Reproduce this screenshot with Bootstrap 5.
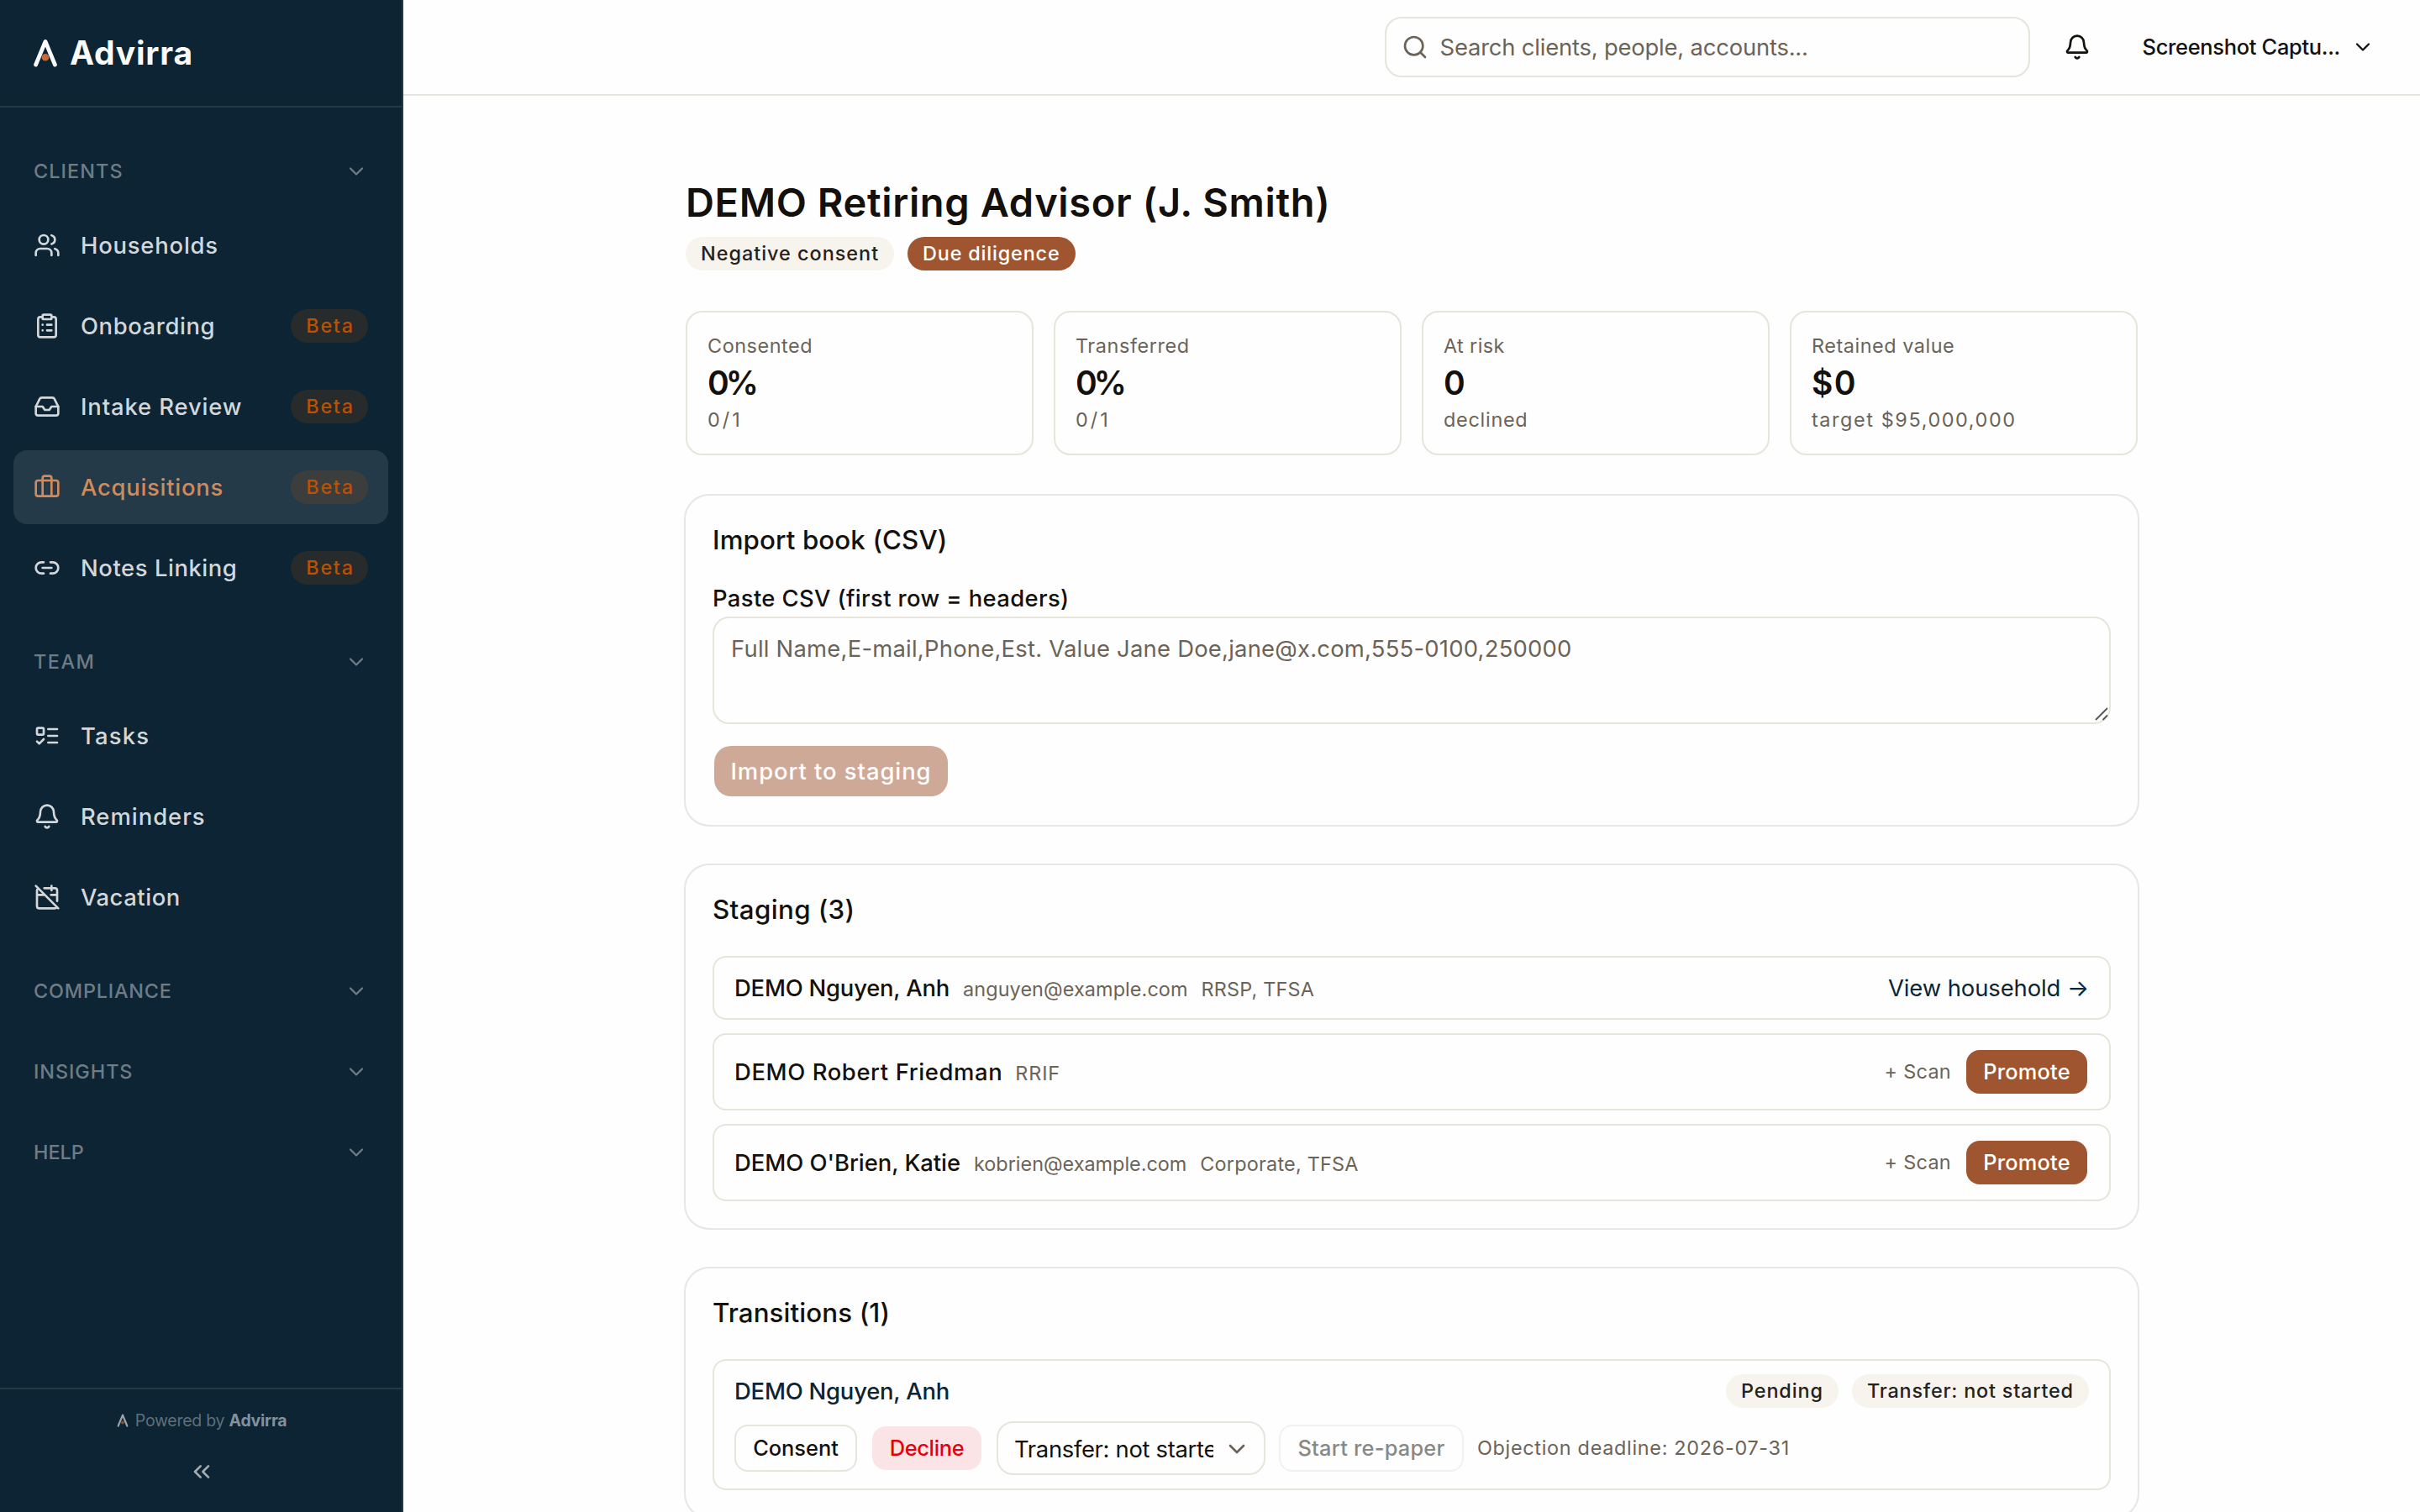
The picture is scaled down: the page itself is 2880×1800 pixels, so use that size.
<!DOCTYPE html>
<html lang="en">
<head>
<meta charset="utf-8">
<title>Advirra – Acquisitions</title>
<link rel="stylesheet" href="https://cdn.jsdelivr.net/npm/bootstrap@5.3.0/dist/css/bootstrap.min.css">
<style>
:root{--navy:#0c2433;--ink:#14110d;--muted:#6b6358;--line:#e7e4dc;--rust:#9f5530;--sand:#f7f4ee}
body{font-family:Inter,"Liberation Sans",sans-serif;font-size:27.4px;line-height:40px;color:var(--ink);background:#fefefe;height:1800px;overflow:hidden}
svg{display:block;fill:none;stroke:currentColor;stroke-width:2;stroke-linecap:round;stroke-linejoin:round;flex:none}
.i32{width:32px;height:32px}.i28{width:28px;height:28px}
.fw-med{font-weight:500}
.t-sm{font-size:23.4px;line-height:32px}
.t-md{font-size:25.4px}
.text-soft{color:var(--muted)}

/* sidebar */
.side{width:480px;height:1800px;background:var(--navy);border-right:2px solid #253a47;color:#d3d7d9}
.side-head{height:128px;border-bottom:2px solid #253a47;padding:0 40px 1px;gap:15px;color:#fafafa}
.brand-name{font-size:39px;font-weight:700;letter-spacing:.8px}
.side-groups{padding:48px 16px 0;gap:40px}
.side-label{height:56px;padding:0 24px;font-size:23.4px;font-weight:500;color:#6f7c85}
.side-label .i28{margin-right:0}
.side-items{padding-top:16px;gap:8px}
.side-item{height:88px;padding:0 24px;gap:24px;border-radius:16px;font-weight:500}
.side-item.on{background:#253a48;color:#d08a5c}
.beta{width:92px;height:40px;border-radius:20px;background:rgba(193,84,0,.15);color:#bf5000;font-size:23.4px;font-weight:500;letter-spacing:1.7px;padding-left:2px}
.side-foot{border-top:2px solid #253a47;height:148px;padding:21px 0 0 2px}
.powered{font-size:19.5px;line-height:32px;color:#5f707b;gap:3px;letter-spacing:-.25px}
.powered b{color:#85919a;font-weight:700}

/* top bar */
.topbar{height:114px;border-bottom:2px solid #e7e3df;padding:0 54px 1px 0}
.searchbox{width:768px;height:72px;border:2px solid var(--line);border-radius:20px;padding:0 18px;gap:14px;color:var(--muted)}
.bell{margin-left:40px}
.user{margin-left:62px;gap:13px;font-weight:500;letter-spacing:-.29px}

/* content */
.page-col{width:1728px;margin:0 auto;padding-top:96px}
h1.title{font-size:47px;line-height:62px;font-weight:600;letter-spacing:.63px;margin:0 0 10px}
.pill{height:40px;border-radius:20px;background:var(--sand);font-size:23.4px;line-height:40px;font-weight:500;color:#26211b;padding:0 0 0 18px}
.pill-rust{background:var(--rust);color:#fff}
.stats{margin-top:48px;gap:24px}
.stat{height:172px;border:2px solid var(--line);border-radius:20px;padding:22px 24px 0;flex:1 1 0}
.stat .cap{font-size:23.4px;line-height:36px;color:var(--muted)}
.stat .val{font-size:39px;line-height:52px;font-weight:600}
.panel{margin-top:48px;padding:32px;border-radius:28px;box-shadow:0 0 0 2px #e6e6e6}
.panel h2{font-size:31.3px;line-height:42px;font-weight:500;margin:0 0 34px}
.csv-label{display:block;line-height:28px;font-weight:500;margin-bottom:8px;letter-spacing:.38px}
.csv{display:block;width:100%;height:128px;border:2px solid var(--line);border-radius:20px;padding:16px 20px;background:transparent;resize:none;letter-spacing:.24px;overflow:hidden}
.csv::placeholder{color:var(--muted);opacity:1}
.grip{position:absolute;right:3px;bottom:4px;width:16px;height:16px;stroke:#555;stroke-width:1.8;stroke-linecap:butt}
.btn{border-radius:16px;padding:0;font-weight:500;line-height:1;border:0}
.btn-import{margin:26px 0 2px 2px;padding-top:1px;width:278px;height:60px;border-radius:20px;font-size:27.4px;letter-spacing:.95px}
.btn-rust,.btn-rust:hover{background:var(--rust);color:#fff}
.btn-rust:disabled{background:#cfa997;color:#fff;opacity:1}
.line-row{border:2px solid var(--line);border-radius:16px;padding:0 24px}
.line-row .t-sm{letter-spacing:.1px}
.btn-promote{width:144px;height:52px;font-size:25.4px;letter-spacing:.21px;margin-right:2px;padding-bottom:1px}
.trans{height:156px;border:2px solid var(--line);border-radius:16px;padding:16px 24px}
.act{height:56px;border:2px solid var(--line);font-size:25.4px;color:var(--ink);background:#fefefe}
.act-decline{height:52px;background:#fbe4e6;color:#e7000b}
.act:disabled{border-color:#f3f1ed;color:#8a8885;opacity:1}
.pick{width:320px;height:64px;border:2px solid var(--line);border-radius:20px;padding:1px 16px 0 19px;gap:12px}
.pick span{width:237px;overflow:hidden;white-space:nowrap;letter-spacing:-.31px}
</style>
</head>
<body>
<svg class="d-none">
  <symbol id="chev" viewBox="0 0 24 24"><path d="m6 9 6 6 6-6"/></symbol>
  <symbol id="bell" viewBox="0 0 24 24"><path d="M10.268 21a2 2 0 0 0 3.464 0"/><path d="M3.262 15.326A1 1 0 0 0 4 17h16a1 1 0 0 0 .74-1.673C19.41 13.956 18 12.499 18 8A6 6 0 0 0 6 8c0 4.499-1.411 5.956-2.738 7.326"/></symbol>
  <symbol id="mark-a" viewBox="0 0 28 34"><path d="M2.6 31 14 3.4 25.4 31" stroke-width="4.8"/><circle cx="14" cy="22.2" r="4.3" fill="#c76a35" stroke="none"/></symbol>
</svg>
<div class="d-flex">
  <aside class="side d-flex flex-column flex-shrink-0">
    <div class="side-head d-flex align-items-center">
      <svg width="28" height="34" viewBox="0 0 28 34"><use href="#mark-a"/></svg>
      <span class="brand-name">Advirra</span>
    </div>
    <nav class="side-groups d-flex flex-column flex-grow-1">
      <section>
        <div class="side-label d-flex align-items-center justify-content-between"><span style="letter-spacing:1.1px">CLIENTS</span><svg class="i28"><use href="#chev"/></svg></div>
        <div class="side-items d-flex flex-column">
          <div class="side-item d-flex align-items-center"><svg class="i32" viewBox="0 0 24 24"><path d="M16 21v-2a4 4 0 0 0-4-4H6a4 4 0 0 0-4 4v2"/><path d="M16 3.128a4 4 0 0 1 0 7.744"/><path d="M22 21v-2a4 4 0 0 0-3-3.87"/><circle cx="9" cy="7" r="4"/></svg><span style="letter-spacing:.8px">Households</span></div>
          <div class="side-item d-flex align-items-center"><svg class="i32" viewBox="0 0 24 24"><rect width="8" height="4" x="8" y="2" rx="1"/><path d="M16 4h2a2 2 0 0 1 2 2v14a2 2 0 0 1-2 2H6a2 2 0 0 1-2-2V6a2 2 0 0 1 2-2h2M12 11h4M12 16h4M8 11h.01M8 16h.01"/></svg><span style="letter-spacing:.6px">Onboarding</span><span class="beta ms-auto d-flex align-items-center justify-content-center">Beta</span></div>
          <div class="side-item d-flex align-items-center"><svg class="i32" viewBox="0 0 24 24"><path d="M22 12h-6l-2 3h-4l-2-3H2"/><path d="M5.45 5.11 2 12v6a2 2 0 0 0 2 2h16a2 2 0 0 0 2-2v-6l-3.45-6.89A2 2 0 0 0 16.76 4H7.24a2 2 0 0 0-1.79 1.11z"/></svg><span style="letter-spacing:.88px">Intake Review</span><span class="beta ms-auto d-flex align-items-center justify-content-center">Beta</span></div>
          <div class="side-item on d-flex align-items-center"><svg class="i32" viewBox="0 0 24 24"><path d="M16 20V4a2 2 0 0 0-2-2h-4a2 2 0 0 0-2 2v16"/><rect width="20" height="14" x="2" y="6" rx="2"/></svg><span style="letter-spacing:.75px">Acquisitions</span><span class="beta ms-auto d-flex align-items-center justify-content-center">Beta</span></div>
          <div class="side-item d-flex align-items-center"><svg class="i32" viewBox="0 0 24 24"><path d="M9 17H7A5 5 0 0 1 7 7h2M15 7h2a5 5 0 1 1 0 10h-2M8 12h8"/></svg><span style="letter-spacing:.57px">Notes Linking</span><span class="beta ms-auto d-flex align-items-center justify-content-center">Beta</span></div>
        </div>
      </section>
      <section>
        <div class="side-label d-flex align-items-center justify-content-between"><span style="letter-spacing:1.5px">TEAM</span><svg class="i28"><use href="#chev"/></svg></div>
        <div class="side-items d-flex flex-column">
          <div class="side-item d-flex align-items-center"><svg class="i32" viewBox="0 0 24 24"><rect x="3" y="5" width="6" height="6" rx="1"/><path d="m3 17 2 2 4-4M13 6h8M13 12h8M13 18h8"/></svg><span style="letter-spacing:1.2px">Tasks</span></div>
          <div class="side-item d-flex align-items-center"><svg class="i32"><use href="#bell"/></svg><span style="letter-spacing:1px">Reminders</span></div>
          <div class="side-item d-flex align-items-center"><svg class="i32" viewBox="0 0 24 24"><path d="M4.2 4.2A2 2 0 0 0 3 6v14a2 2 0 0 0 2 2h14a2 2 0 0 0 1.82-1.18M21 15.5V6a2 2 0 0 0-2-2H9.5M16 2v4M3 10h7M21 10h-5.5M2 2l20 20"/></svg><span style="letter-spacing:.55px">Vacation</span></div>
        </div>
      </section>
      <div class="side-label d-flex align-items-center justify-content-between"><span style="letter-spacing:.82px">COMPLIANCE</span><svg class="i28"><use href="#chev"/></svg></div>
      <div class="side-label d-flex align-items-center justify-content-between"><span style="letter-spacing:.95px">INSIGHTS</span><svg class="i28"><use href="#chev"/></svg></div>
      <div class="side-label d-flex align-items-center justify-content-between"><span>HELP</span><svg class="i28"><use href="#chev"/></svg></div>
    </nav>
    <div class="side-foot d-flex flex-column align-items-center">
      <div class="powered d-flex align-items-center"><svg width="14" height="16" viewBox="0 0 28 34" opacity=".6" color="#fafafa"><use href="#mark-a"/></svg><span>&nbsp;Powered by <b>Advirra</b></span></div>
      <svg class="i32" style="margin-top:29px;color:#a3abb1" viewBox="0 0 24 24"><path d="m11 17-5-5 5-5M18 17l-5-5 5-5"/></svg>
    </div>
  </aside>

  <div class="flex-grow-1">
    <header class="topbar d-flex align-items-center justify-content-end">
      <div class="searchbox d-flex align-items-center"><svg class="i32" viewBox="0 0 24 24"><circle cx="11" cy="11" r="8"/><path d="m21 21-4.34-4.34"/></svg><span style="letter-spacing:-.19px">Search clients, people, accounts...</span></div>
      <svg class="bell i32"><use href="#bell"/></svg>
      <div class="user t-md d-flex align-items-center"><span>Screenshot Captu...</span><svg class="i28"><use href="#chev"/></svg></div>
    </header>

    <main class="page-col">
      <h1 class="title">DEMO Retiring Advisor (J. Smith)</h1>
      <div class="d-flex" style="gap:16px">
        <span class="pill" style="width:248px;letter-spacing:1px">Negative consent</span>
        <span class="pill pill-rust" style="width:200px;letter-spacing:.84px">Due diligence</span>
      </div>

      <div class="stats d-flex">
        <div class="stat"><div class="cap" style="letter-spacing:.55px">Consented</div><div class="val" style="letter-spacing:-4px">0%</div><div class="cap" style="letter-spacing:3px">0/1</div></div>
        <div class="stat"><div class="cap" style="letter-spacing:.6px">Transferred</div><div class="val" style="letter-spacing:-4px">0%</div><div class="cap" style="letter-spacing:3px">0/1</div></div>
        <div class="stat"><div class="cap" style="letter-spacing:.4px">At risk</div><div class="val">0</div><div class="cap" style="letter-spacing:.75px">declined</div></div>
        <div class="stat"><div class="cap" style="letter-spacing:.55px">Retained value</div><div class="val" style="letter-spacing:1.5px">$0</div><div class="cap" style="letter-spacing:1.6px">target $95,000,000</div></div>
      </div>

      <section class="panel">
        <h2 style="letter-spacing:.1px">Import book (CSV)</h2>
        <label class="csv-label" for="csv">Paste CSV (first row = headers)</label>
        <div class="position-relative">
          <textarea class="csv" id="csv" placeholder="Full Name,E-mail,Phone,Est. Value Jane Doe,jane@x.com,555-0100,250000"></textarea>
          <svg class="grip" viewBox="0 0 16 16"><path d="M1 15 15 1M9.5 15 15 9.5"/></svg>
        </div>
        <button class="btn btn-rust btn-import d-block" disabled>Import to staging</button>
      </section>

      <section class="panel">
        <h2 style="letter-spacing:.38px">Staging (3)</h2>
        <div class="d-flex flex-column" style="gap:16px">
          <div class="line-row d-flex align-items-center justify-content-between" style="height:76px">
            <div class="d-flex align-items-baseline" style="gap:16px"><span class="fw-med" style="letter-spacing:-.2px">DEMO Nguyen, Anh</span><span class="t-sm text-soft">anguyen@example.com</span><span class="t-sm text-soft" style="letter-spacing:.2px">RRSP, TFSA</span></div>
            <span style="color:var(--navy);letter-spacing:-.07px">View household →</span>
          </div>
          <div class="line-row d-flex align-items-center justify-content-between" style="height:92px">
            <div class="d-flex align-items-baseline" style="gap:15px"><span class="fw-med" style="letter-spacing:.62px">DEMO Robert Friedman</span><span class="t-sm text-soft" style="letter-spacing:.9px">RRIF</span></div>
            <div class="d-flex align-items-center" style="gap:18px"><span class="t-sm text-soft" style="letter-spacing:.3px">+ Scan</span><button class="btn btn-rust btn-promote">Promote</button></div>
          </div>
          <div class="line-row d-flex align-items-center justify-content-between" style="height:92px">
            <div class="d-flex align-items-baseline" style="gap:16px"><span class="fw-med" style="letter-spacing:-.03px">DEMO O'Brien, Katie</span><span class="t-sm text-soft" style="letter-spacing:0">kobrien@example.com</span><span class="t-sm text-soft" style="letter-spacing:.22px">Corporate, TFSA</span></div>
            <div class="d-flex align-items-center" style="gap:18px"><span class="t-sm text-soft" style="letter-spacing:.3px">+ Scan</span><button class="btn btn-rust btn-promote">Promote</button></div>
          </div>
        </div>
      </section>

      <section class="panel">
        <h2 style="letter-spacing:.1px">Transitions (1)</h2>
        <div class="trans">
          <div class="d-flex align-items-center justify-content-between">
            <span class="fw-med" style="color:var(--navy);letter-spacing:-.2px">DEMO Nguyen, Anh</span>
            <div class="d-flex" style="gap:16px"><span class="pill" style="width:134px;letter-spacing:.9px">Pending</span><span class="pill" style="width:282px;letter-spacing:.8px">Transfer: not started</span></div>
          </div>
          <div class="d-flex align-items-center" style="gap:16px;margin-top:16px">
            <button class="btn act" style="width:146px">Consent</button>
            <button class="btn act act-decline border-0" style="width:130px;margin:0 2px;letter-spacing:-.33px">Decline</button>
            <div class="pick d-flex align-items-center"><span>Transfer: not started</span><svg class="i32 text-soft"><use href="#chev"/></svg></div>
            <button class="btn act" style="width:220px;letter-spacing:.21px" disabled>Start re-paper</button>
            <span class="t-sm text-soft" style="letter-spacing:.7px">Objection deadline: 2026-07-31</span>
          </div>
        </div>
      </section>
    </main>
  </div>
</div>
<script src="https://cdn.jsdelivr.net/npm/bootstrap@5.3.0/dist/js/bootstrap.bundle.min.js"></script>
</body>
</html>
